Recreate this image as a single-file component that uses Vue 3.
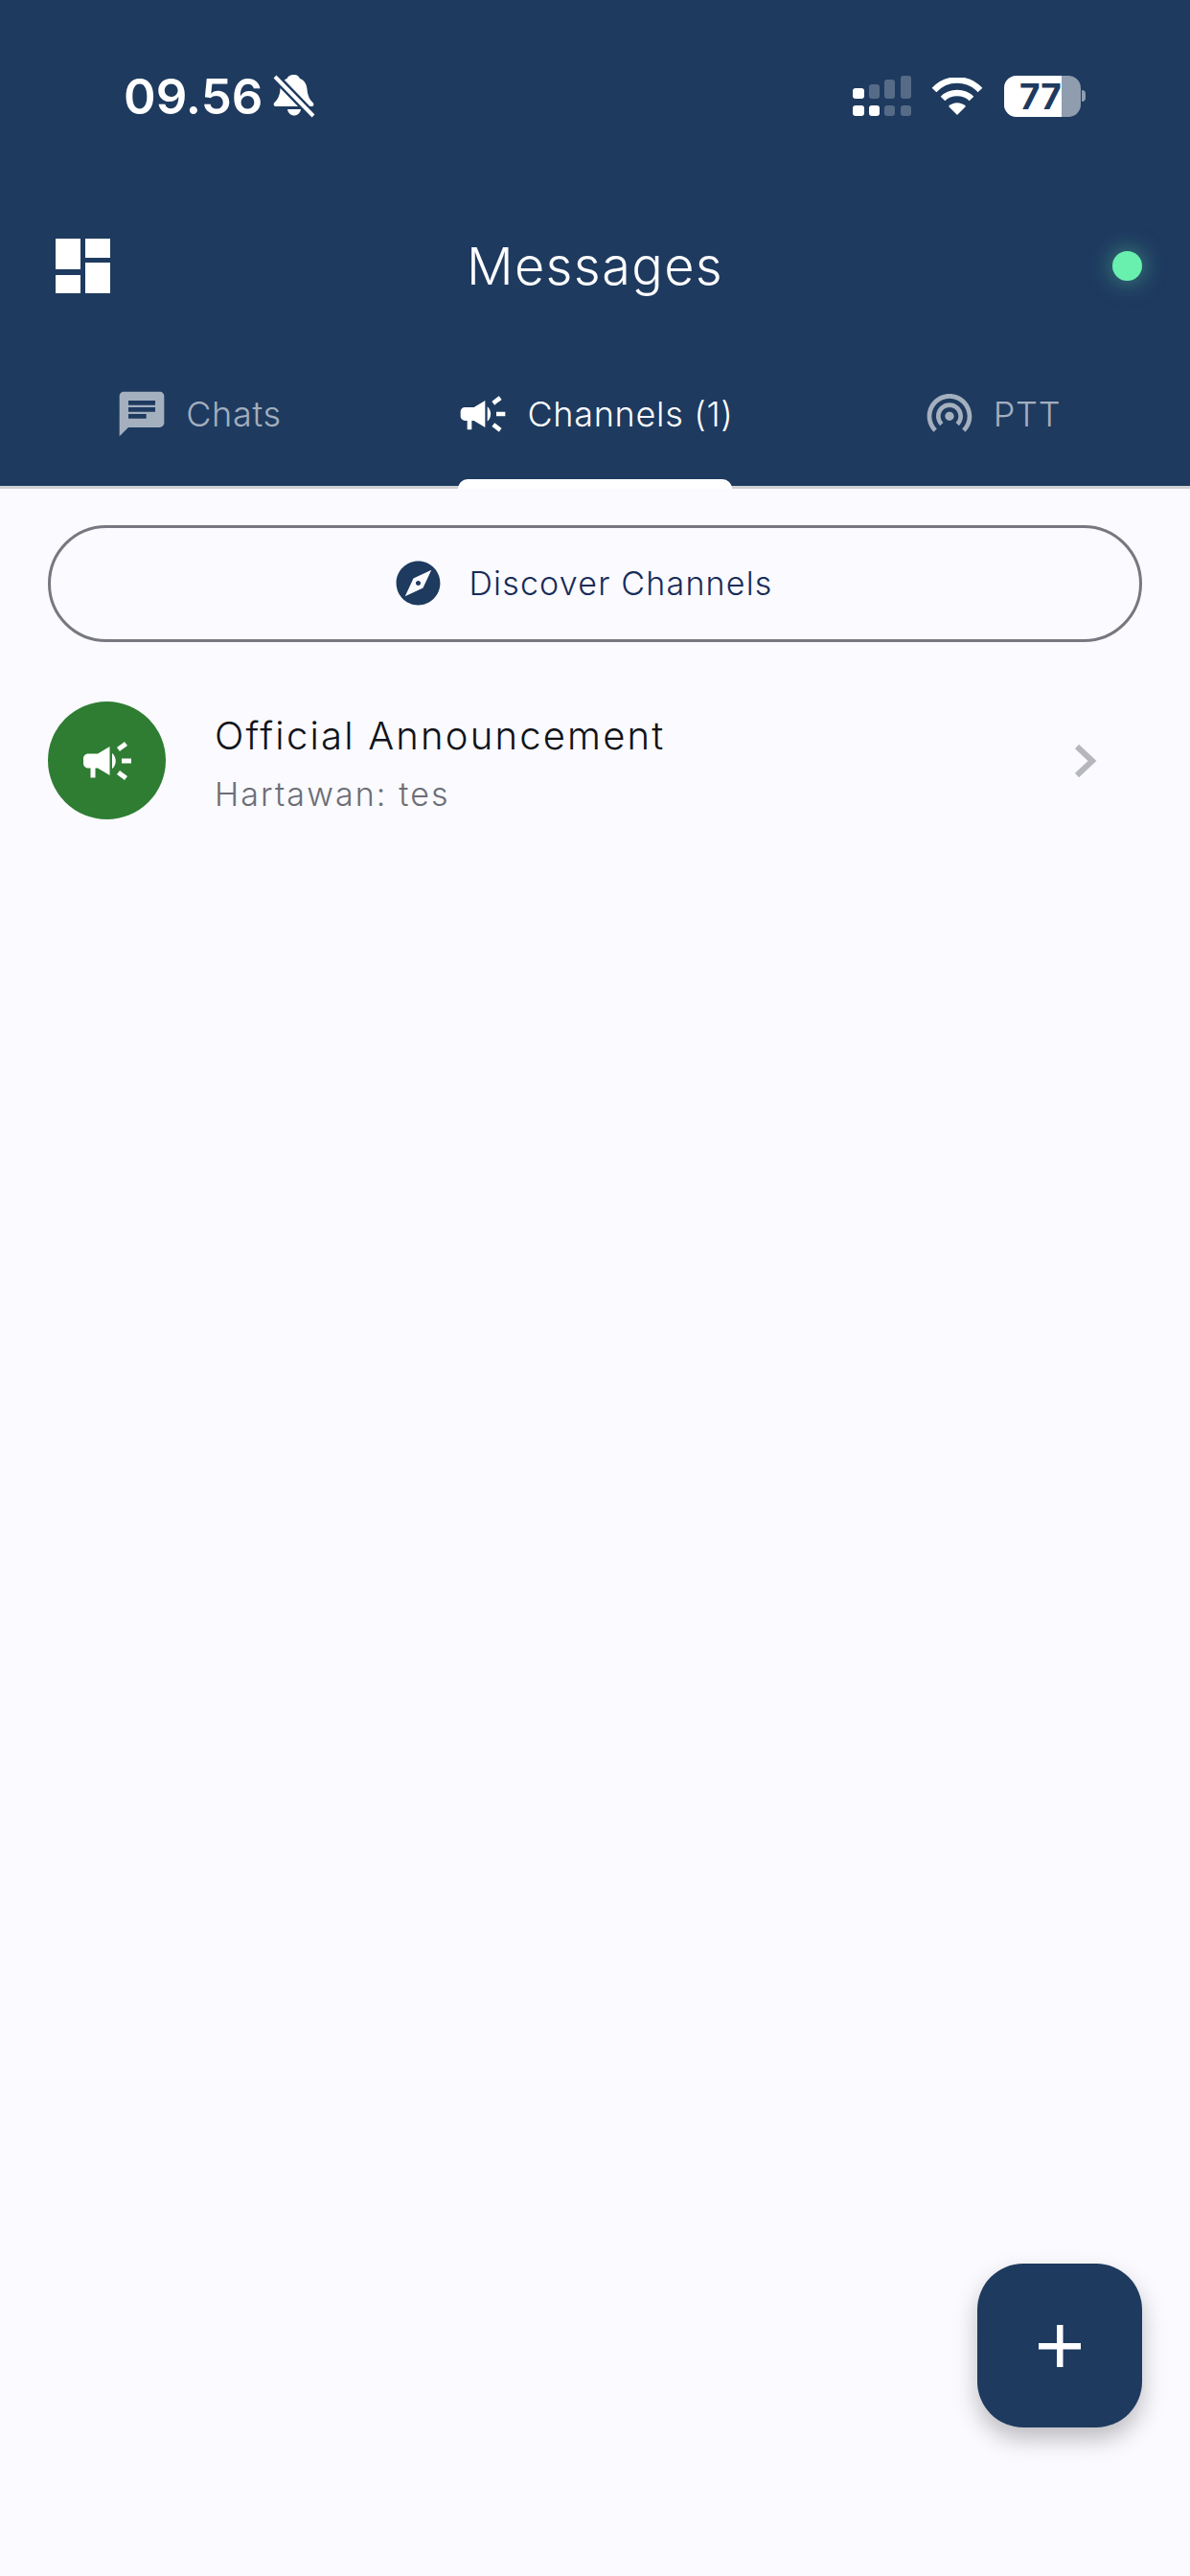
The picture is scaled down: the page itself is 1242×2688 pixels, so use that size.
<template>
  <div class="messages-page">
    <header class="app-header">
      <div class="status-bar">
        <div class="status-left">
          <span class="clock">09.56</span>
          <svg class="bell" width="44" height="46" viewBox="0 0 44 46">
            <path d="M22 1c3.500 0 5 2 6 4 5 2 7 6 7.500 11 .6 6 2 10 6 14 1.500 1.500 1 4-1 4H3c-2.500 0-3-2.500-1.500-4 4-4 5.500-8 6-14 .5-5 2.500-9 7-11 1-2 3-4 7.500-4z" fill="#fff" />
            <path d="M15 37h14c-.6 4-3.500 6.500-7 6.500S15.600 41 15 37z" fill="#fff" />
            <line x1="3" y1="4" x2="41" y2="43" stroke="#1e3a5f" stroke-width="9" />
            <line x1="2" y1="3" x2="42" y2="44" stroke="#fff" stroke-width="4" />
          </svg>
        </div>
        <div class="status-right">
          <svg width="62" height="43" viewBox="0 0 62 43">
            <rect x="0" y="13" width="12" height="11" rx="3" fill="#fff" />
            <rect x="17" y="9" width="11" height="15" rx="3" fill="#fff" opacity="0.25" />
            <rect x="33" y="4" width="11" height="20" rx="3" fill="#fff" opacity="0.25" />
            <rect x="50" y="0" width="11" height="24" rx="3" fill="#fff" opacity="0.25" />
            <rect x="0" y="31" width="12" height="11" rx="3" fill="#fff" />
            <rect x="17" y="31" width="11" height="11" rx="3" fill="#fff" />
            <rect x="33" y="31" width="11" height="11" rx="3" fill="#fff" opacity="0.25" />
            <rect x="50" y="31" width="11" height="11" rx="3" fill="#fff" opacity="0.25" />
          </svg>
          <svg class="wifi" width="54" height="39" viewBox="0 0 54 39">
            <path d="M3 13C16-1 38-1 51 13" fill="none" stroke="#fff" stroke-width="6.500" />
            <path d="M12 22c8-8 22-8 30 0" fill="none" stroke="#fff" stroke-width="6.500" />
            <path d="M18 30c5-5 13-5 18 0l-9 9z" fill="#fff" />
          </svg>
          <div class="battery">
            <div class="battery-body">
              <div class="battery-fill"></div>
              <span class="battery-level">77</span>
            </div>
            <span class="battery-nub"></span>
          </div>
        </div>
      </div>

      <div class="toolbar">
        <div class="toolbar-side">
          <svg class="grid-icon" width="57" height="57" viewBox="0 0 57 57" fill="#fff">
            <rect x="0" y="0" width="26" height="32" />
            <rect x="31" y="0" width="26" height="20" />
            <rect x="0" y="38" width="26" height="19" />
            <rect x="31" y="25" width="26" height="32" />
          </svg>
        </div>
        <h1 class="title">Messages</h1>
        <div class="toolbar-side end">
          <span class="online-dot"></span>
        </div>
      </div>

      <nav class="tabs">
        <div v-for="tab in tabs" :key="tab.label" class="tab" :class="{ active: tab.active }">
          <svg width="56" height="56" viewBox="0 0 24 24" fill="currentColor">
            <path :d="tab.icon" />
          </svg>
          <span>{{ tab.label }}</span>
          <span v-if="tab.active" class="tab-indicator"></span>
        </div>
      </nav>
    </header>

    <main class="content">
      <button class="discover-btn">
        <svg width="55" height="55" viewBox="0 0 24 24" fill="#1e3a5f">
          <path d="M12 10.900c-.61 0-1.100.49-1.100 1.100s.49 1.100 1.100 1.100c.61 0 1.100-.49 1.100-1.100s-.49-1.100-1.100-1.100zM12 2C6.480 2 2 6.480 2 12s4.480 10 10 10 10-4.480 10-10S17.520 2 12 2zm2.190 12.190L6 18l3.810-8.190L18 6l-3.810 8.190z" />
        </svg>
        <span>Discover Channels</span>
      </button>

      <div class="channel-row">
        <div class="channel-avatar">
          <svg width="60" height="60" viewBox="0 0 24 24" fill="#fff">
            <path :d="campaignIcon" />
          </svg>
        </div>
        <div class="channel-text">
          <div class="channel-name">Official Announcement</div>
          <div class="channel-preview">Hartawan: tes</div>
        </div>
        <svg class="chevron" width="26" height="38" viewBox="0 0 26 38">
          <polyline points="4,4 20,19 4,34" fill="none" stroke="#b6b7bd" stroke-width="6" />
        </svg>
      </div>
    </main>

    <button class="fab">
      <svg width="44" height="44" viewBox="0 0 44 44" fill="#fff">
        <rect x="19" y="0" width="6.500" height="44" />
        <rect x="0" y="19" width="44" height="6.500" />
      </svg>
    </button>
  </div>
</template>

<script setup>
const campaignIcon = 'M18 11v2h4v-2h-4zm-2 6.610c.96.71 2.210 1.650 3.200 2.390.4-.53.8-1.070 1.200-1.600-.99-.74-2.240-1.680-3.200-2.400-.4.54-.8 1.080-1.200 1.610zM20.400 5.600c-.4-.53-.8-1.070-1.200-1.600-.99.74-2.240 1.680-3.200 2.400.4.53.8 1.070 1.200 1.600.96-.72 2.210-1.650 3.200-2.400zM4 9c-1.100 0-2 .9-2 2v2c0 1.100.9 2 2 2h1v4h2v-4h1l5 3V6L8 9H4zm11.500 3c0-1.330-.58-2.530-1.500-3.350v6.690c.92-.81 1.500-2.010 1.500-3.340z'

const tabs = [
  {
    label: 'Chats',
    icon: 'M20 2H4c-1.100 0-1.990.9-1.990 2L2 22l4-4h14c1.100 0 2-.9 2-2V4c0-1.100-.9-2-2-2zM6 9h12v2H6V9zm8 5H6v-2h8v2zm4-6H6V6h12v2z'
  },
  { label: 'Channels (1)', icon: campaignIcon, active: true },
  {
    label: 'PTT',
    icon: 'M12 11c-1.100 0-2 .9-2 2 0 .55.23 1.050.59 1.410.36.36.86.59 1.410.59.55 0 1.050-.23 1.410-.59.36-.36.59-.86.59-1.410 0-1.100-.9-2-2-2zm6 2c0-3.310-2.690-6-6-6s-6 2.690-6 6c0 1.660.68 3.150 1.760 4.240l1.420-1.420C8.450 15.100 8 14.110 8 13c0-2.210 1.790-4 4-4s4 1.790 4 4c0 1.110-.45 2.100-1.180 2.820l1.420 1.420C17.320 16.150 18 14.660 18 13zM12 3C6.480 3 2 7.480 2 13c0 2.760 1.120 5.260 2.930 7.070l1.420-1.420C4.900 17.210 4 15.210 4 13c0-4.420 3.580-8 8-8s8 3.580 8 8c0 2.210-.9 4.210-2.350 5.650l1.420 1.420C20.880 18.260 22 15.760 22 13c0-5.520-4.480-10-10-10z'
  }
]
</script>

<style>
html, body { margin: 0; background: #fafaff; }
</style>

<style scoped>
.messages-page { position: relative; width: 1242px; height: 2688px; background: #fafaff; font-family: Inter, "Noto Sans", sans-serif; overflow: hidden; }

.app-header { background: #1e3a5f; height: 507px; border-bottom: 3px solid #cfd0d6; display: flex; flex-direction: column; }

.status-bar { height: 200px; display: flex; align-items: center; justify-content: space-between; padding: 0 109px 0 129px; }
.status-left { display: flex; align-items: center; gap: 11px; }
.clock { font-size: 51px; font-weight: 600; color: #fff; }
.status-right { display: flex; align-items: center; }
.wifi { margin-left: 20px; margin-right: 22px; }
.battery { display: flex; align-items: center; gap: 1px; }
.battery-body { position: relative; width: 80px; height: 43px; border-radius: 13px; background: rgba(255, 255, 255, 0.5); overflow: hidden; display: flex; align-items: center; padding-left: 16px; box-sizing: border-box; }
.battery-fill { position: absolute; left: 0; top: 0; bottom: 0; width: 60px; background: #fff; }
.battery-level { position: relative; font-size: 37px; font-weight: 700; color: #1e3a5f; }
.battery-nub { width: 4px; height: 12px; border-radius: 0 6px 6px 0; background: rgba(255, 255, 255, 0.5); }

.toolbar { height: 155px; display: flex; align-items: center; padding: 0 50px; }
.toolbar-side { width: 100px; display: flex; padding-left: 8px; box-sizing: border-box; }
.toolbar-side.end { justify-content: flex-end; padding-left: 0; }
.title { flex: 1; margin: 0; text-align: center; font-size: 54px; font-weight: 300; letter-spacing: 1.400px; color: #fff; }
.online-dot { width: 31px; height: 31px; border-radius: 50%; background: #69f0ae; box-shadow: 0 0 24px rgba(105, 240, 174, 0.5); }

.tabs { flex: 1; display: grid; grid-template-columns: repeat(3, 1fr); }
.tab { position: relative; display: flex; align-items: center; justify-content: center; gap: 18px; color: rgba(255, 255, 255, 0.6); font-size: 36px; font-weight: 300; letter-spacing: 0.700px; padding-top: 2px; }
.tab.active { color: #fff; }
.tab-indicator { position: absolute; left: 64px; right: 64px; bottom: -3px; height: 10px; background: #fff; border-radius: 10px 10px 0 0; }

.content { padding: 38px 50px 0; }
.discover-btn { width: 100%; height: 122px; border: 3px solid #77787f; border-radius: 61px; background: transparent; display: flex; align-items: center; justify-content: center; gap: 25px; padding: 0 26px 2px 0; color: #182c58; font-family: inherit; font-size: 34px; font-weight: 300; letter-spacing: 1.200px; }
.channel-row { display: flex; align-items: center; margin-top: 62px; padding-right: 46px; }
.channel-avatar { width: 123px; height: 123px; border-radius: 50%; background: #2e7d32; display: flex; align-items: center; justify-content: center; flex-shrink: 0; }
.channel-text { flex: 1; margin-left: 51px; padding-top: 4px; }
.channel-name { font-size: 40px; font-weight: 300; letter-spacing: 2.200px; color: #111318; }
.channel-preview { margin-top: 16px; font-size: 34px; font-weight: 300; letter-spacing: 2.100px; color: #6c6e76; }

.fab { position: absolute; left: 1020px; top: 2362px; width: 172px; height: 171px; border: none; border-radius: 48px; background: #1e3a5f; box-shadow: 0 12px 24px rgba(0, 0, 0, 0.25); display: flex; align-items: center; justify-content: center; padding: 0; }
</style>
